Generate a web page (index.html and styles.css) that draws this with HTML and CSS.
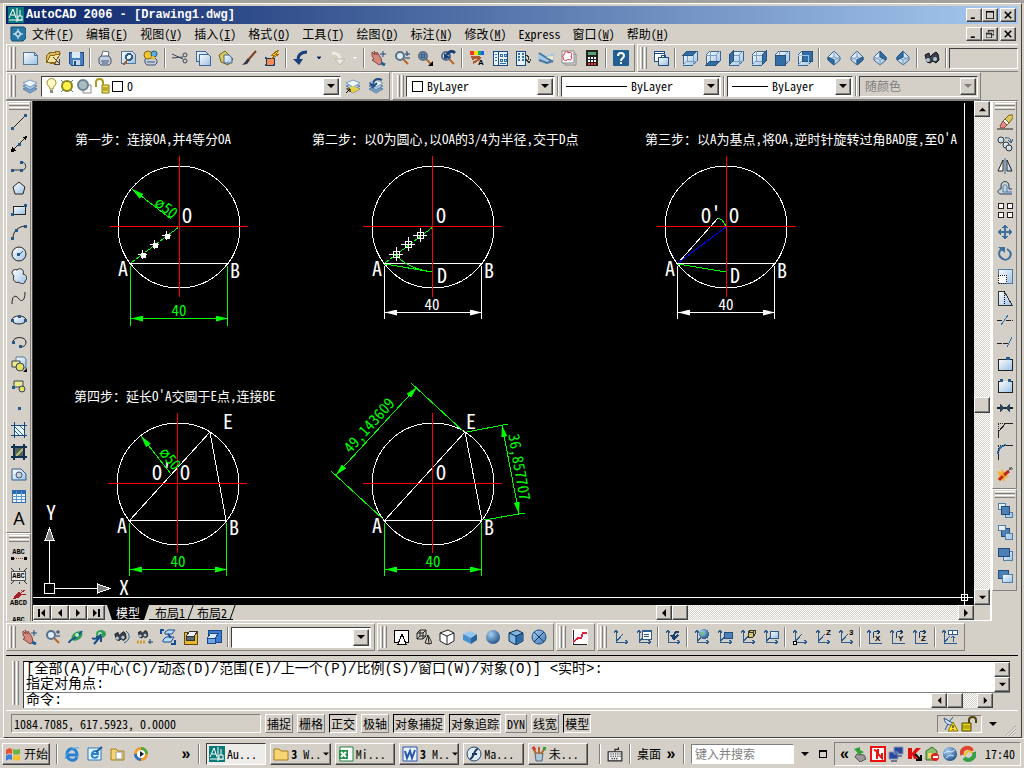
FILE: index.html
```
<!DOCTYPE html>
<html lang="zh-CN">
<head>
  <meta charset="UTF-8">
  <title>AutoCAD 2006 - [Drawing1.dwg]</title>
  <link rel="stylesheet" href="styles.css">
</head>
<body>
  <!-- shared icon parts -->
  <svg class="defs" aria-hidden="true">
    <defs>
      <linearGradient id="paper" x1="0" y1="0" x2="1" y2="1"><stop offset="0" stop-color="#fff"/><stop offset="1" stop-color="#9fc3e6"/></linearGradient>
      <linearGradient id="blue" x1="0" y1="0" x2="1" y2="1"><stop offset="0" stop-color="#a8d0f4"/><stop offset="1" stop-color="#3f78b0"/></linearGradient>
      <radialGradient id="ball" cx=".35" cy=".3" r=".8"><stop offset="0" stop-color="#a8d0f4"/><stop offset="1" stop-color="#174a80"/></radialGradient>
      <marker id="arrow" viewBox="0 0 12 6" refX="12" refY="3" markerWidth="12" markerHeight="6" orient="auto-start-reverse"><path d="M0 0L12 3L0 6z" class="tip"/></marker>
      <marker id="arrow-white" viewBox="0 0 12 6" refX="12" refY="3" markerWidth="12" markerHeight="6" orient="auto-start-reverse"><path d="M0 0L12 3L0 6z" class="tip-white"/></marker>
    </defs>
    <symbol id="cube" viewBox="0 0 16 16"><path d="M1 5l4-4h10v10l-4 4H1z" fill="url(#paper)" stroke="#3a6694"/><path d="M1 5h10v10M11 5l4-4M5 1v10h10M5 11l-4 4" fill="none" stroke="#7d9dbd"/></symbol>
    <symbol id="iso" viewBox="0 0 16 16"><path d="M8 1l6 6v3l-6 5-6-5V7z" fill="url(#paper)" stroke="#3a6694"/><path d="M2 7l6 3 6-3M8 10v5M8 1v6l-6 3M8 7l6 3" fill="none" stroke="#7d9dbd"/></symbol>
    <symbol id="ucs" viewBox="0 0 16 16"><path d="M3 1v12h12M1 4l2-3 2 3M12 11l3 2-3 2M3 13l7-8" fill="none" stroke="#2d5c8c"/></symbol>
    <symbol id="layers" viewBox="0 0 16 16"><path d="M1 11l7-3 7 3-7 4z" fill="#7da4cc" stroke="#5a7fa6"/><path d="M1 8l7-3 7 3-7 4z" fill="#a9c8e6" stroke="#5a7fa6"/><path d="M1 5l7-3 7 3-7 4z" fill="#eef6ff" stroke="#7d9dbd"/></symbol>
    <symbol id="printer" viewBox="0 0 16 16"><path d="M4 7l2-6 6 1-1 6" fill="#fff" stroke="#5b6a80"/><path d="M2 8l2-2h8l2 3v4l-2 2H4l-2-2z" fill="#c2cde0" stroke="#44546e"/><path d="M4 11h8M5 13h6" stroke="#44546e"/></symbol>
    <symbol id="hand" viewBox="0 0 16 16"><path d="M1 2l3 3-1-4 3 4V2l4 6 1 5-3 2-4-3-3-2 2-1-2-3z" fill="#d08a80" stroke="#8d443c"/><path d="M12 1v6M9 4h6" stroke="#1f4c80"/><path d="M10 13l4 2" stroke="#1f5c90" stroke-width="3"/></symbol>
    <symbol id="lens" viewBox="0 0 16 16"><path d="M9 9l5 5" stroke="#b5672c" stroke-width="2"/><circle cx="6" cy="6" r="4" fill="#dcecfb" stroke="#5b6f86" stroke-width="2"/></symbol>
    <symbol id="binocular" viewBox="0 0 16 16"><path d="M1 5l4-2 1 4 3-3 3-2 2 2 1 6-3 3-3-2-3 2-3-1z" fill="#39424e" stroke="#111"/><circle cx="4" cy="10" r="2" fill="#b5c4d6"/><circle cx="11" cy="9" r="2" fill="#b5c4d6"/></symbol>
    <symbol id="left" viewBox="0 0 8 8"><path d="M6 0v8L2 4z"/></symbol>
    <symbol id="right" viewBox="0 0 8 8"><path d="M2 0v8l4-4z"/></symbol>
    <symbol id="up" viewBox="0 0 8 8"><path d="M0 6h8L4 2z"/></symbol>
    <symbol id="down" viewBox="0 0 8 8"><path d="M0 2h8L4 6z"/></symbol>
    <symbol id="cad" viewBox="0 0 16 16"><path d="M0 0h16v16H0z" fill="#087a78"/><path d="M1 11l4-9 3 9M3 8h4M9 1v14M1 13h14M12 3v8" fill="none" stroke="#fff"/><path d="M10 9h4v4h-4z" fill="#087a78" stroke="#fff"/></symbol>
  </svg>

  <div class="window">
    <header class="title">
      <svg viewBox="0 0 16 16"><use href="#cad"/></svg>
      <h1>AutoCAD 2006 - [Drawing1.dwg]</h1>
      <div class="captions">
        <button aria-label="最小化"><svg viewBox="0 0 10 10"><path d="M1 8h5v2H1z"/></svg></button>
        <button aria-label="最大化"><svg viewBox="0 0 10 10"><path d="M0 0h10v10H0zM1 2v7h8V2z" fill-rule="evenodd"/></svg></button>
        <button class="close" aria-label="关闭"><svg viewBox="0 0 10 10"><path d="M1 1l8 8M9 1L1 9" stroke="#000" stroke-width="2"/></svg></button>
      </div>
    </header>

    <nav class="menu">
      <svg viewBox="0 0 16 16"><path d="M1 1h13l2 2v9l-3 3H2l-1-2z" fill="#2577a7" stroke="#174a70"/><path d="M8 3v10M3 8h10" stroke="#fff"/><path d="M6 6h4v4H6z" fill="#2577a7" stroke="#fff"/></svg>
      <a href="#">文件<span>(<u>F</u>)</span></a>
      <a href="#">编辑<span>(<u>E</u>)</span></a>
      <a href="#">视图<span>(<u>V</u>)</span></a>
      <a href="#">插入<span>(<u>I</u>)</span></a>
      <a href="#">格式<span>(<u>O</u>)</span></a>
      <a href="#">工具<span>(<u>T</u>)</span></a>
      <a href="#">绘图<span>(<u>D</u>)</span></a>
      <a href="#">标注<span>(<u>N</u>)</span></a>
      <a href="#">修改<span>(<u>M</u>)</span></a>
      <a href="#"><span>E<u>x</u>press</span></a>
      <a href="#">窗口<span>(<u>W</u>)</span></a>
      <a href="#">帮助<span>(<u>H</u>)</span></a>
      <div class="captions">
        <button aria-label="最小化文档"><svg viewBox="0 0 10 10"><path d="M1 8h5v2H1z"/></svg></button>
        <button aria-label="还原文档"><svg viewBox="0 0 10 10"><path d="M3 3V0h7v6H7M3 1h7M0 4h7v6H0zM0 5h7" fill="none" stroke="#000"/></svg></button>
        <button class="close" aria-label="关闭文档"><svg viewBox="0 0 10 10"><path d="M1 1l8 8M9 1L1 9" stroke="#000" stroke-width="2"/></svg></button>
      </div>
    </nav>

    <div class="row">
      <div class="bar">
        <i class="grip"></i>
        <button class="tool" aria-label="新建"><svg viewBox="0 0 16 16"><path d="M1 2h11l3 3v9H1z" fill="url(#paper)" stroke="#557697"/><path d="M12 2v3h3" fill="none" stroke="#557697"/></svg></button>
        <button class="tool" aria-label="打开"><svg viewBox="0 0 16 16"><path d="M2 5l4-3 2 1 5-2 2 1-5 12-9-2z" fill="#dcb95c" stroke="#8a6a1e"/><path d="M5 6l10-2-5 9-8-1z" fill="#f4e3a0" stroke="#8a6a1e"/><path d="M8 7l6 6M14 9v5H9" fill="none" stroke="#444"/></svg></button>
        <button class="tool" aria-label="保存"><svg viewBox="0 0 16 16"><path d="M1 2h14v13H3l-2-2z" fill="#4a7fc0" stroke="#1e4c84"/><path d="M4 2h8v6H4z" fill="#dceaf8"/><path d="M5 10h7v5H5z" fill="#c8d8ea"/><path d="M7 11v4" stroke="#1e4c84" stroke-width="2"/></svg></button>
        <i class="sep"></i>
        <button class="tool soft" aria-label="打印"><svg viewBox="0 0 16 16"><use href="#printer"/></svg></button>
        <button class="tool" aria-label="打印预览"><svg viewBox="0 0 16 16"><path d="M1 1h11l3 3v9H1z" fill="url(#paper)" stroke="#557697"/><circle cx="9" cy="7" r="3" fill="#e8f3ff" stroke="#375c82" stroke-width="2"/><path d="M7 10l-3 5" stroke="#a65b28" stroke-width="2"/></svg></button>
        <button class="tool soft" aria-label="发布"><svg viewBox="0 0 16 16"><path d="M2 9l2-1h8l2 2v3l-2 2H4l-2-2z" fill="#c2cde0" stroke="#44546e"/><path d="M4 12h8" stroke="#44546e"/><circle cx="5" cy="5" r="4" fill="#f2c230" stroke="#8a6a1e"/><circle cx="11" cy="4" r="3" fill="#5bb0d6" stroke="#1c5b86"/><circle cx="10" cy="8" r="2" fill="#f2c230"/></svg></button>
        <i class="sep"></i>
        <button class="tool soft" aria-label="剪切"><svg viewBox="0 0 16 16"><path d="M0 4l11 5M0 8l11-1" stroke="#3a4658"/><circle cx="13" cy="5" r="2" fill="none" stroke="#3a4658"/><circle cx="13" cy="11" r="2" fill="none" stroke="#3a4658"/></svg></button>
        <button class="tool" aria-label="复制"><svg viewBox="0 0 16 16"><path d="M1 1h9l2 2v8H1z" fill="url(#paper)" stroke="#3f6792"/><path d="M4 4h9l2 2v9H4z" fill="url(#paper)" stroke="#3f6792"/></svg></button>
        <button class="tool soft" aria-label="粘贴"><svg viewBox="0 0 16 16"><path d="M1 5l6-4 8 8-5 6-7-3z" fill="#ddc75a" stroke="#77661c"/><path d="M6 5h5l3 3v5H6z" fill="url(#paper)" stroke="#3f6792"/></svg></button>
        <button class="tool soft" aria-label="特性匹配"><svg viewBox="0 0 16 16"><path d="M15 1L8 9" stroke="#7c3f20" stroke-width="2"/><path d="M7 8l2 2-3 4-5 1 3-3z" fill="#333"/></svg></button>
        <button class="tool" aria-label="块编辑器"><svg viewBox="0 0 16 16"><path d="M2 8h8v7H2z" fill="#f58a5b" stroke="#1c3550"/><path d="M14 0L8 5h3L7 9l8-5h-3l3-4z" fill="#ffd92e" stroke="#a26a00"/><path d="M1 7h2v2H1zM9 14h2v2H9zM1 14h2v2H1z" fill="#1c4c80"/></svg></button>
        <i class="sep"></i>
        <button class="tool soft" aria-label="放弃"><svg viewBox="0 0 16 16"><path d="M14 2C8 2 5 5 5 10" fill="none" stroke="#17407a" stroke-width="3"/><path d="M0 9h10l-4 6z" fill="#17407a"/></svg></button>
        <button class="drop" aria-label="放弃列表"><svg viewBox="0 0 8 8"><path d="M2 3h4L4 5z" stroke="#17407a"/></svg></button>
        <button class="tool soft" aria-label="重做"><svg viewBox="0 0 16 16"><path d="M3 3c6 0 8 2 8 7" fill="none" stroke="#eeece8" stroke-width="3"/><path d="M6 9h10l-5 6z" fill="#eeece8" stroke="#bbb7ae"/></svg></button>
        <button class="drop" aria-label="重做列表"><svg viewBox="0 0 8 8"><path d="M2 3h4L4 5z" fill="#fff"/></svg></button>
        <i class="sep"></i>
        <button class="tool soft" aria-label="实时平移"><svg viewBox="0 0 16 16"><use href="#hand"/></svg></button>
        <button class="tool soft" aria-label="实时缩放"><svg viewBox="0 0 16 16"><use href="#lens"/><path d="M11 4h5M13 1v5M11 8h5" stroke="#163f70"/></svg></button>
        <button class="tool soft" aria-label="窗口缩放"><svg viewBox="0 0 16 16"><use href="#lens"/><path d="M4 4h4v4H4z" fill="#4c86bd" stroke="#17406f"/><path d="M16 11v5h-5z"/></svg></button>
        <button class="tool soft" aria-label="缩放上一个"><svg viewBox="0 0 16 16"><use href="#lens"/><path d="M15 3C11-1 8 3 7 5" fill="none" stroke="#17407a" stroke-width="3"/><path d="M4 3l7 5-7 1z" fill="#17407a"/></svg></button>
        <i class="sep"></i>
        <button class="tool" aria-label="特性"><svg viewBox="0 0 16 16"><path d="M1 1h4v4H1z" fill="#e32"/><path d="M5 1h4v4H5z" fill="#fd0"/><path d="M9 1h3v4H9z" fill="#0b5"/><path d="M12 1h3v4h-3z" fill="#25f"/><path d="M2 7h7M3 9l8-2M4 13l8-5" stroke="#a85a38" stroke-width="2"/><text x="9" y="15" class="glyph">A</text></svg></button>
        <button class="tool" aria-label="设计中心"><svg viewBox="0 0 16 16"><path d="M1 1h14v14H1z" fill="#eaf4ff" stroke="#184a80"/><path d="M6 1v14" stroke="#184a80"/><path d="M3 4h2M3 7h2M3 10h2M8 4h2v2H8zM12 4h2v2h-2zM8 9h2v2H8zM12 9h2v2h-2zM8 13h6" fill="none" stroke="#316fa8"/></svg></button>
        <button class="tool" aria-label="工具选项板"><svg viewBox="0 0 16 16"><path d="M1 1h9v14H1z" fill="#eaf4ff" stroke="#184a80"/><path d="M3 4h2M3 7h2M3 10h2M7 4h2M7 7h2M7 10h2" stroke="#316fa8" stroke-width="2"/><path d="M10 5c3 0 4 2 4 5M11 9l3 4 2-4" fill="none" stroke="#333"/></svg></button>
        <button class="tool soft" aria-label="图纸集管理器"><svg viewBox="0 0 16 16"><path d="M0 2l8 4 8-3v7l-8 4-8-3z" fill="#a6c9e5"/><path d="M1 3l14 9M1 10l8 3 6-2" fill="none" stroke="#4b789e" stroke-width="2"/><path d="M8 7l7-1v4z" fill="#f6eac0"/></svg></button>
        <button class="tool soft" aria-label="标记集管理器"><svg viewBox="0 0 16 16"><path d="M4 4h11v11H4z" fill="#ddd" stroke="#888"/><path d="M1 1h12v12H1z" fill="#fff" stroke="#888"/><path d="M3 5c0-4 4-4 4-2 3-2 5 1 3 3 2 3-1 5-3 3-2 3-6 1-4-1-2-1-1-3 0-3z" fill="none" stroke="#d8203c"/></svg></button>
        <button class="tool" aria-label="快速计算器"><svg viewBox="0 0 16 16"><path d="M2 0h12v16H2z" fill="#222"/><path d="M4 2h8v3H4z" fill="#54a46c"/><path d="M4 8h2M7 8h2M10 8h2M4 11h2M7 11h2M10 11h2" stroke="#fff" stroke-width="2"/><path d="M4 14h2M7 14h2M10 14h2" stroke="#e33" stroke-width="2"/></svg></button>
        <i class="sep"></i>
        <button class="tool soft" aria-label="帮助"><svg viewBox="0 0 16 16"><rect x="0" y="0" width="16" height="16" rx="1" fill="#205f96"/><path d="M5 6c0-4 6-4 6 0 0 2-3 2-3 5" fill="none" stroke="#fff" stroke-width="2"/><path d="M7 12h2v2H7z" fill="#fff"/></svg></button>
      </div>
      <div class="bar grow">
        <i class="grip"></i>
        <button class="tool" aria-label="命名视图"><svg viewBox="0 0 16 16"><path d="M1 1h10v10H1zM1 3h10" fill="#fff" stroke="#1e4f80"/><path d="M5 7h10v8H5z" fill="url(#paper)" stroke="#1e4f80"/><path d="M8 7V5h4v2" fill="none" stroke="#1e4f80"/></svg></button>
        <i class="sep"></i>
        <button class="tool" aria-label="俯视"><svg viewBox="0 0 16 16"><use href="#cube"/><path d="M1 5l4-4h10l-4 4z" class="face"/></svg></button>
        <button class="tool" aria-label="仰视"><svg viewBox="0 0 16 16"><use href="#cube"/><path d="M1 15l4-4h10l-4 4z" class="face"/></svg></button>
        <button class="tool" aria-label="左视"><svg viewBox="0 0 16 16"><use href="#cube"/><path d="M1 5l4-4v10l-4 4z" class="face"/></svg></button>
        <button class="tool" aria-label="右视"><svg viewBox="0 0 16 16"><use href="#cube"/><path d="M11 5l4-4v10l-4 4z" class="face"/></svg></button>
        <button class="tool" aria-label="主视"><svg viewBox="0 0 16 16"><use href="#cube"/><path d="M1 5h10v10H1z" class="face"/></svg></button>
        <button class="tool" aria-label="后视"><svg viewBox="0 0 16 16"><use href="#cube"/><path d="M5 1h10v10H5z" class="face"/><path d="M1 5h10v10" fill="none" stroke="#9fc3e6"/></svg></button>
        <i class="sep"></i>
        <button class="tool soft" aria-label="西南等轴测"><svg viewBox="0 0 16 16"><use href="#iso"/><path d="M2 7l6 3v5l-6-5z" class="face"/></svg></button>
        <button class="tool soft" aria-label="东南等轴测"><svg viewBox="0 0 16 16"><use href="#iso"/><path d="M14 7l-6 3v5l6-5z" class="face"/></svg></button>
        <button class="tool soft" aria-label="东北等轴测"><svg viewBox="0 0 16 16"><use href="#iso"/><path d="M8 1l6 6v3L8 7z" class="face"/></svg></button>
        <button class="tool soft" aria-label="西北等轴测"><svg viewBox="0 0 16 16"><use href="#iso"/><path d="M8 1L2 7v3l6-3z" class="face"/></svg></button>
        <i class="sep"></i>
        <button class="tool soft" aria-label="相机"><svg viewBox="0 0 16 16"><use href="#binocular"/></svg></button>
        <i class="sep"></i>
        <div class="combo empty"></div>
      </div>
    </div>

    <div class="row">
      <div class="bar">
        <i class="grip"></i>
        <button class="tool soft" aria-label="图层特性管理器"><svg viewBox="0 0 16 16"><use href="#layers"/></svg></button>
        <div class="combo layer">
          <svg class="state" viewBox="0 0 72 16">
            <path d="M5 11c0-3-3-3-3-6 0-6 9-6 9 0 0 3-3 3-3 6z" fill="#fffbc0" stroke="#9a8a30"/><path d="M5 12h3v3H5z" fill="#888"/>
            <circle cx="22" cy="8" r="5" fill="#fff04a" stroke="#8a8520" stroke-width="2"/><path d="M16 2l2 2M28 2l-2 2M16 14l2-2M28 14l-2-2" stroke="#3a8f8a"/>
            <path d="M38 7h8v8h-8z" fill="#fff" stroke="#888"/><circle cx="38" cy="7" r="5" fill="#a9bcc4" stroke="#6b8390" stroke-width="2"/>
            <path d="M57 7h7v8h-7z" fill="#f4e24a" stroke="#7f7418"/><path d="M51 9V4c0-4 7-4 7 0v3" fill="none" stroke="#a89c1e" stroke-width="2"/><path d="M58 10h5M58 12h5" stroke="#7f7418"/>
          </svg>
          <i class="swatch"></i>
          <select aria-label="图层"><option>0</option></select>
          <span class="arrow"><svg viewBox="0 0 8 8"><use href="#down"/></svg></span>
        </div>
        <button class="tool soft" aria-label="将对象的图层置为当前"><svg viewBox="0 0 16 16"><use href="#layers"/><path d="M1 11l7-3 7 3-7 4z" fill="#e6cf45"/><path d="M1 15l4-4M2 11h3v3" fill="none" stroke="#000"/></svg></button>
        <button class="tool soft" aria-label="上一个图层"><svg viewBox="0 0 16 16"><use href="#layers"/><path d="M14 2C8-1 5 3 5 7M2 5l3 4 4-4" fill="none" stroke="#1f4d7d" stroke-width="2"/></svg></button>
      </div>
      <div class="bar props">
        <i class="grip"></i>
        <div class="combo color">
          <i class="swatch"></i>
          <select aria-label="颜色"><option>ByLayer</option></select>
          <span class="arrow"><svg viewBox="0 0 8 8"><use href="#down"/></svg></span>
        </div>
        <i class="sep"></i>
        <div class="combo linetype">
          <i class="line"></i>
          <select aria-label="线型"><option>ByLayer</option></select>
          <span class="arrow"><svg viewBox="0 0 8 8"><use href="#down"/></svg></span>
        </div>
        <i class="sep"></i>
        <div class="combo weight">
          <i class="line"></i>
          <select aria-label="线宽"><option>ByLayer</option></select>
          <span class="arrow"><svg viewBox="0 0 8 8"><use href="#down"/></svg></span>
        </div>
        <i class="sep"></i>
        <div class="combo plot">
          <select aria-label="打印样式" disabled><option>随颜色</option></select>
          <span class="arrow"><svg viewBox="0 0 8 8"><use href="#down"/></svg></span>
        </div>
      </div>
    </div>

    <main class="work">
      <div class="dock">
        <div class="bar side">
          <i class="grip"></i>
          <button class="tool" aria-label="直线"><svg viewBox="0 0 16 16"><path d="M2 14L14 2" stroke="#222"/><path d="M0 13h3v3H0zM13 0h3v3h-3z" class="node"/></svg></button>
          <button class="tool" aria-label="构造线"><svg viewBox="0 0 16 16"><path d="M1 15L15 1" stroke="#222"/><path d="M0 16l1-5 4 4zM16 0l-1 5-4-4z"/><path d="M7 7h3v3H7z" class="node"/></svg></button>
          <button class="tool soft" aria-label="多段线"><svg viewBox="0 0 16 16"><path d="M1 12h10c5 0 5-7 0-8" fill="none" stroke="#333"/><path d="M0 11h3v3H0zM9 11h3v3H9zM9 3h3v3H9z" class="node"/></svg></button>
          <button class="tool soft" aria-label="正多边形"><svg viewBox="0 0 16 16"><path d="M8 2l6 5-2 7H4L2 7z" fill="url(#paper)" stroke="#222"/></svg></button>
          <button class="tool" aria-label="矩形"><svg viewBox="0 0 16 16"><path d="M2 4h12v8H2z" fill="url(#paper)" stroke="#222"/><path d="M0 11h3v3H0zM13 2h3v3h-3z" class="node"/></svg></button>
          <button class="tool soft" aria-label="圆弧"><svg viewBox="0 0 16 16"><path d="M2 14C2 8 6 3 14 2" fill="none" stroke="#222"/><path d="M0 13h3v3H0zM4 5h3v3H4zM13 1h3v3h-3z" class="node"/></svg></button>
          <button class="tool soft" aria-label="圆"><svg viewBox="0 0 16 16"><circle cx="8" cy="8" r="7" fill="url(#paper)" stroke="#222"/><path d="M8 9l4-4" stroke="#1e5c98"/><path d="M6 7h3v3H6z" class="node"/></svg></button>
          <button class="tool soft" aria-label="修订云线"><svg viewBox="0 0 16 16"><path d="M3 8C-1 5 2 0 6 2c3-3 8 0 6 4 5 1 4 6 2 7 0 4-5 3-6 1-4 2-7-3-5-6z" fill="url(#paper)" stroke="#222"/></svg></button>
          <button class="tool soft" aria-label="样条曲线"><svg viewBox="0 0 16 16"><path d="M1 14C1 2 7 7 8 9s6 4 6-7" fill="none" stroke="#222"/></svg></button>
          <button class="tool soft" aria-label="椭圆"><svg viewBox="0 0 16 16"><ellipse cx="8" cy="8" rx="7" ry="4" fill="url(#paper)" stroke="#222"/><path d="M0 7h3v3H0zM7 3h3v3H7zM13 7h3v3h-3z" class="node"/></svg></button>
          <button class="tool soft" aria-label="椭圆弧"><svg viewBox="0 0 16 16"><path d="M2 8c0-6 13-6 13 0 0 4-3 5-6 5" fill="none" stroke="#222"/><path d="M1 7h3v3H1zM8 11h3v3H8z" class="node"/></svg></button>
          <button class="tool soft" aria-label="插入块"><svg viewBox="0 0 16 16"><path d="M5 1h8l2 2v9H5z" fill="url(#paper)" stroke="#557697"/><path d="M1 5h8v6H1z" fill="#eee88c" stroke="#345"/><circle cx="9" cy="11" r="4" fill="#e4de62" stroke="#345"/><path d="M16 12v4h-4z"/></svg></button>
          <button class="tool soft" aria-label="创建块"><svg viewBox="0 0 16 16"><path d="M3 3h9v6H3z" fill="#eee88c" stroke="#345"/><circle cx="11" cy="11" r="3" fill="#e4de62" stroke="#345"/><path d="M1 8h3v3H1z" class="node"/></svg></button>
          <button class="tool" aria-label="点"><svg viewBox="0 0 16 16"><path d="M7 7h3v3H7z" class="node"/></svg></button>
          <button class="tool" aria-label="图案填充"><svg viewBox="0 0 16 16"><path d="M3 3h10v10H3z" fill="#eaf5ff"/><path d="M3 8l5 5M3 4l9 9M8 3l5 5" stroke="#1e6aa6"/><path d="M3 0v16M13 0v16M0 3h16M0 13h16" stroke="#174a7c"/></svg></button>
          <button class="tool" aria-label="渐变色"><svg viewBox="0 0 16 16"><path d="M3 3h10v10H3z" fill="#52645c"/><path d="M5 12l7-7" stroke="#b7b573" stroke-width="2"/><path d="M3 0v16M13 0v16M0 3h16M0 13h16" stroke="#122f50" stroke-width="2"/></svg></button>
          <button class="tool soft" aria-label="面域"><svg viewBox="0 0 16 16"><path d="M1 3h9l5 5v6H1z" fill="url(#paper)" stroke="#2d5c8c"/><circle cx="8" cy="9" r="3" fill="#d4d0c8" stroke="#2d5c8c"/></svg></button>
          <button class="tool" aria-label="表格"><svg viewBox="0 0 16 16"><path d="M1 2h13v12H1z" fill="#eef6ff" stroke="#2d6cb0"/><path d="M1 4h13" stroke="#2d6cb0" stroke-width="3"/><path d="M1 8h13M1 11h13M5 3v11M10 3v11" stroke="#5f93cc"/></svg></button>
          <button class="tool letter">A</button>
        </div>
        <div class="bar side cut">
          <i class="grip"></i>
          <button class="tool abc"><span>ABC</span><svg viewBox="0 0 16 4"><path d="M0 1h3v3H0zM13 1h3v3h-3z"/><path d="M3 2h10" stroke="#a33" stroke-dasharray="1 1"/></svg></button>
          <button class="tool abc boxed"><svg viewBox="0 0 16 3"><path d="M0 0l3 3M16 0l-3 3M8 0v2" stroke="#333"/></svg><span>ABC</span><svg viewBox="0 0 16 3"><path d="M3 0L0 3M13 0l3 3M8 1v2" stroke="#333"/></svg></button>
          <button class="tool abc"><svg viewBox="0 0 16 9"><path d="M2 9l3-5 3-2 3 3-4 3z" fill="#a31f24"/><path d="M10 3l4-3M11 4h4M10 1V0" stroke="#a31f24"/></svg><span>ABCD</span></button>
          <button class="tool abc"><span>ABC</span></button>
        </div>
      </div>

      <section class="sheet">
        <div class="view">
          <svg class="drawing" viewBox="33 101 941 504" preserveAspectRatio="xMinYMin meet">
            <g class="caption">
              <text x="75" y="144">第一步：连接OA,并4等分OA</text>
              <text x="312" y="144">第二步：以O为圆心,以OA的3/4为半径,交于D点</text>
              <text x="645" y="144">第三步：以A为基点,将OA,逆时针旋转过角BAD度,至O'A</text>
              <text x="74" y="401">第四步：延长O'A交圆于E点,连接BE</text>
            </g>

            <!-- step 1 -->
            <g class="white"><circle cx="179" cy="227" r="61"/><path d="M131 263.5h97"/></g>
            <path class="red" d="M179.5 156v141M110 226.5h138"/>
            <path class="green dash" d="M131 263L179 227"/>
            <path class="green" d="M130.5 266v60M227.5 266v60"/>
            <path class="green ends" d="M131 318.5h97"/>
            <path class="green end" d="M171 219L132 189"/>
            <g class="points"><path d="M138 254.5h9M142.5 250v9M150 244.5h9M154.5 240v9M162 235.5h9M166.5 231v9"/><path class="dot" d="M141 253h4v4h-4zM153 243h4v4h-4zM165 234h4v4h-4z"/></g>
            <g class="label"><text x="182" y="223">O</text><text x="118" y="276">A</text><text x="230" y="278">B</text></g>
            <g class="dim"><text x="179" y="316">40</text><text transform="translate(163 212) rotate(38)">ø50</text></g>

            <!-- step 2 -->
            <g class="white"><circle cx="433" cy="227" r="61"/><path d="M385 263.5h97M384.5 266v53M481.5 266v53"/></g>
            <path class="red" d="M432.5 156v141M363 226.5h139"/>
            <path class="green dash" d="M385 263L433 227"/>
            <path class="green" d="M385 264L432 272M396 254Q405 268 432 272"/>
            <path class="white ends-white" d="M385 312.5h97"/>
            <g class="points"><path d="M389 254.5h14M396.5 247v14M401 244.5h14M408.5 237v14M413 235.5h14M420.5 228v14"/><path d="M393.5 251.5h6v6h-6zM405.5 241.5h6v6h-6zM417.5 232.5h6v6h-6z"/></g>
            <g class="label"><text x="436" y="223">O</text><text x="372" y="276">A</text><text x="484" y="278">B</text><text x="437" y="283">D</text></g>
            <g class="dim light"><text x="432" y="310">40</text></g>

            <!-- step 3 -->
            <g class="white"><circle cx="726" cy="227" r="61"/><path d="M678 263.5h97M677.5 266v53M774.5 266v53M678 263L718 218"/></g>
            <path class="red" d="M726.5 156v141M657 226.5h139"/>
            <path class="blue" d="M678 263L726 227"/>
            <path class="green" d="M678 264L726 272M718 218L722 220L726 226"/>
            <path class="white ends-white" d="M678 312.5h97"/>
            <g class="label"><text x="729" y="223">O</text><text x="701" y="223">O'</text><text x="665" y="276">A</text><text x="777" y="278">B</text><text x="730" y="283">D</text></g>
            <g class="dim light"><text x="726" y="310">40</text></g>

            <!-- step 4 -->
            <g class="white"><circle cx="178" cy="484" r="61"/><path d="M130 520.5h97M130 520L210 432L226 520"/></g>
            <path class="red" d="M177.5 413v140M108 483.5h139"/>
            <path class="green" d="M129.5 523v53M226.5 523v53"/>
            <path class="green ends" d="M130 569.5h97"/>
            <path class="green end" d="M171 474L141 436"/>
            <g class="label"><text x="180" y="480">O</text><text x="152" y="480">O'</text><text x="117" y="533">A</text><text x="229" y="535">B</text><text x="223" y="429">E</text></g>
            <g class="dim"><text x="178" y="567">40</text><text transform="translate(166 462) rotate(51)">ø50</text></g>

            <!-- measured result -->
            <g class="white"><circle cx="433" cy="484" r="61"/><path d="M385 520.5h97M385 520L465 432L482 520"/></g>
            <path class="red" d="M432.5 413v140M363 483.5h139"/>
            <path class="green" d="M384.5 523v53M481.5 523v53M383 519L331 471M463 431L411 383M467 432L508 424M484 520L525 513"/>
            <path class="green ends" d="M385 569.5h97"/>
            <path class="green ends" d="M336 475L417 387"/>
            <path class="green ends" d="M502 425L519 514"/>
            <g class="label"><text x="436" y="480">O</text><text x="372" y="533">A</text><text x="484" y="535">B</text><text x="466" y="429">E</text></g>
            <g class="dim"><text x="433" y="567">40</text><text transform="translate(373 429) rotate(-48)">49,143609</text><text transform="translate(514 468) rotate(80)">36,857707</text></g>

            <!-- ucs icon and crosshair -->
            <path class="white" d="M44.5 583.5h10v10h-10zM49.5 583V540M55 588.5h43"/>
            <path class="axis" d="M45 540.5h9L49.5 528zM97.5 584v9L110 588.5z"/>
            <g class="label"><text x="46" y="520">Y</text><text x="119" y="595">X</text></g>
            <path class="white" d="M964.5 103v502M33 597.5h940M961.5 594.5h6v6h-6z"/>
          </svg>
          <div class="vscroll"><button aria-label="向上"><svg viewBox="0 0 8 8"><use href="#up"/></svg></button><i class="space"></i><i class="thumb"></i><i class="space low"></i><button aria-label="向下"><svg viewBox="0 0 8 8"><use href="#down"/></svg></button></div>
        </div>
        <div class="tabs">
          <button aria-label="第一个"><svg viewBox="0 0 8 8"><path d="M0 0h2v8H0zM7 0v8L3 4z"/></svg></button>
          <button aria-label="上一个"><svg viewBox="0 0 8 8"><use href="#left"/></svg></button>
          <button aria-label="下一个"><svg viewBox="0 0 8 8"><use href="#right"/></svg></button>
          <button aria-label="最后一个"><svg viewBox="0 0 8 8"><path d="M6 0h2v8H6zM1 0v8l4-4z"/></svg></button>
          <button class="tab active">模型</button>
          <button class="tab">布局1</button>
          <button class="tab">布局2</button>
          <div class="hscroll"><button aria-label="向左"><svg viewBox="0 0 8 8"><use href="#left"/></svg></button><i class="thumb"></i><i class="space"></i><button aria-label="向右"><svg viewBox="0 0 8 8"><use href="#right"/></svg></button></div>
        </div>
      </section>

      <div class="dock">
        <div class="bar side">
          <i class="grip"></i>
          <button class="tool soft" aria-label="删除"><svg viewBox="0 0 16 16"><path d="M0 15h16" stroke="#222"/><path d="M12 1h4v3l-4 5-4-4z" fill="#d9c75e" stroke="#77661c"/><path d="M8 5l4 4-2 2-4-4z" fill="#fff" stroke="#77661c"/><path d="M6 7l4 4-3 3H4l-1-2z" fill="#e58a84" stroke="#8d443c"/></svg></button>
          <button class="tool soft" aria-label="复制对象"><svg viewBox="0 0 16 16"><g fill="url(#paper)" stroke="#333"><circle cx="4" cy="4" r="3"/><circle cx="9" cy="9" r="3"/><circle cx="12" cy="12" r="3"/></g><path d="M8 2c4-1 6 1 6 4M11 4l3 3 2-4" fill="none" stroke="#1b4f88"/></svg></button>
          <button class="tool soft" aria-label="镜像"><svg viewBox="0 0 16 16"><path d="M1 13L6 2v11z" fill="#fff" stroke="#222"/><path d="M10 2l5 11h-5z" fill="url(#paper)" stroke="#222"/><path d="M8 0v16" stroke="#2d6cb0"/></svg></button>
          <button class="tool soft" aria-label="偏移"><svg viewBox="0 0 16 16"><path d="M15 14H4c-4 0-4-5 0-5V6c0-6 8-6 8 0v3h3" fill="none" stroke="#1d3f66"/><path d="M15 12H6V7c0-3 4-3 4 0v5" fill="none" stroke="#3a7dc0"/></svg></button>
          <button class="tool" aria-label="阵列"><svg viewBox="0 0 16 16"><path d="M1 1h5v5H1zM10 1h5v5h-5zM1 10h5v5H1zM10 10h5v5h-5z" fill="#fff" stroke="#222"/></svg></button>
          <button class="tool" aria-label="移动"><svg viewBox="0 0 16 16"><path d="M8 0l3 4H9v3h3V5l4 3-4 3V9H9v3h2l-3 4-3-4h2V9H4v2L0 8l4-3v2h3V4H5z" fill="#416f9d"/></svg></button>
          <button class="tool soft" aria-label="旋转"><svg viewBox="0 0 16 16"><path d="M10 3c8 5 1 13-4 10-5-2-5-8-1-10" fill="none" stroke="#416f9d" stroke-width="2"/><path d="M1 1h7v6z" fill="#416f9d"/></svg></button>
          <button class="tool" aria-label="缩放"><svg viewBox="0 0 16 16"><path d="M1 1h14v14H1z" fill="url(#paper)" stroke="#55799d"/><path d="M1 7h8v8H1z" fill="#fff" stroke="#222" stroke-dasharray="1 1"/></svg></button>
          <button class="tool" aria-label="拉伸"><svg viewBox="0 0 16 16"><path d="M1 15V1h6l8 14z" fill="url(#paper)" stroke="#333"/><path d="M7 1v14" stroke="#000" stroke-dasharray="1 1"/></svg></button>
          <button class="tool" aria-label="修剪"><svg viewBox="0 0 16 16"><path d="M0 8h5M9 8h7" stroke="#222" stroke-dasharray="5 1 1 1"/><path d="M4 13l7-10" stroke="#2d6cb0"/></svg></button>
          <button class="tool" aria-label="延伸"><svg viewBox="0 0 16 16"><path d="M0 9h5M6 9h6" stroke="#222" stroke-dasharray="5 1 1 1"/><path d="M10 13l5-10" stroke="#2d6cb0"/></svg></button>
          <button class="tool" aria-label="打断于点"><svg viewBox="0 0 16 16"><path d="M1 3h14v11H1z" fill="url(#paper)" stroke="#222"/><path d="M9 1h4v3H9z" class="node"/></svg></button>
          <button class="tool" aria-label="打断"><svg viewBox="0 0 16 16"><path d="M1 3h14v11H1z" fill="url(#paper)"/><path d="M4 3H1v11h14V3h-3" fill="none" stroke="#222"/><path d="M3 1h3v3H3zM11 1h3v3h-3z" class="node"/></svg></button>
          <button class="tool" aria-label="合并"><svg viewBox="0 0 16 16"><path d="M0 8h16" stroke="#222" stroke-width="2"/><path d="M3 4l5 4-5 4zM13 4L8 8l5 4z" fill="#27435f"/></svg></button>
          <button class="tool" aria-label="倒角"><svg viewBox="0 0 16 16"><path d="M1 16v-6l8-9h7" fill="none" stroke="#222"/><path d="M1 9V1h7" fill="none" stroke="#222" stroke-dasharray="1 1"/></svg></button>
          <button class="tool" aria-label="圆角"><svg viewBox="0 0 16 16"><path d="M1 16v-6M9 1h7" stroke="#222"/><path d="M1 10c0-5 4-9 8-9" fill="none" stroke="#2d6cb0" stroke-width="2"/><path d="M1 9V1h7" fill="none" stroke="#222" stroke-dasharray="1 1"/></svg></button>
          <button class="tool soft" aria-label="分解"><svg viewBox="0 0 16 16"><path d="M0 5l4 1 1-3 3 3 3-1-1 4 2 2-4 1-1 4-3-3-4 1 2-4z" fill="#f3b23a"/><path d="M2 14l4-4M7 9l5-4" stroke="#c3261c" stroke-width="3"/><path d="M11 5l4-4M13 1v3M12 3h4" stroke="#555"/></svg></button>
        </div>
        <div class="bar side">
          <i class="grip"></i>
          <button class="tool" aria-label="前置"><svg viewBox="0 0 16 16"><path d="M1 1h7v6H1zM8 10h7v5H8z" class="sheet-light"/><path d="M4 4h8v8H4z" class="sheet-dark"/></svg></button>
          <button class="tool" aria-label="后置"><svg viewBox="0 0 16 16"><path d="M4 4h8v8H4z" class="sheet-dark"/><path d="M1 1h7v5H1zM8 9h7v6H8z" class="sheet-light"/></svg></button>
          <button class="tool" aria-label="置于对象之上"><svg viewBox="0 0 16 16"><path d="M6 5h9v9H6z" class="sheet-light"/><path d="M1 2h11v8H1z" class="sheet-dark"/></svg></button>
          <button class="tool" aria-label="置于对象之下"><svg viewBox="0 0 16 16"><path d="M1 2h10v8H1z" class="sheet-dark"/><path d="M5 6h10v8H5z" class="sheet-light"/></svg></button>
        </div>
      </div>
    </main>

    <div class="row lower">
      <div class="bar">
        <i class="grip"></i>
        <button class="tool soft" aria-label="三维平移"><svg viewBox="0 0 16 16"><use href="#hand"/></svg></button>
        <button class="tool soft" aria-label="三维缩放"><svg viewBox="0 0 16 16"><use href="#lens"/><path d="M11 3h4M13 1v4M11 7h4" stroke="#163f70"/></svg></button>
        <button class="tool soft" aria-label="三维动态观察"><svg viewBox="0 0 16 16"><ellipse cx="9" cy="7" rx="6" ry="4" fill="#2f9e55" transform="rotate(-35 9 7)"/><path d="M1 14c0-4 7-3 13-12" fill="none" stroke="#1c5b86" stroke-width="2"/><circle cx="9" cy="6" r="2" fill="#b8e8c0"/></svg></button>
        <button class="tool soft" aria-label="三维连续观察"><svg viewBox="0 0 16 16"><ellipse cx="10" cy="5" rx="5" ry="4" fill="#2f9e55"/><circle cx="9" cy="5" r="2" fill="#b8e8c0"/><path d="M1 9c3 2 8-1 9-4M3 15l6-7M5 8h5v5" fill="none" stroke="#1c4e86" stroke-width="2"/></svg></button>
        <button class="tool soft" aria-label="三维旋转"><svg viewBox="0 0 16 16"><use href="#binocular" width="13" height="13" y="1"/><path d="M12 2c5 4 4 9-2 12" fill="none" stroke="#2a5b8c"/></svg></button>
        <button class="tool soft" aria-label="三维调整距离"><svg viewBox="0 0 16 16"><use href="#binocular" width="12" height="11"/><path d="M11 13h5M13 10v5" stroke="#17406f"/><path d="M0 13h9" stroke="#d39a2c" stroke-width="3" stroke-dasharray="2 1"/></svg></button>
        <button class="tool soft" aria-label="三维调整剪裁平面"><svg viewBox="0 0 16 16"><path d="M5 3l3-2h7l-3 4H5zM3 11l3-3h8l-3 5H3z" fill="#b8d9f8" stroke="#174e91"/><path d="M8 5l3 4M1 5V1h3M15 11v4h-4" fill="none" stroke="#174e91" stroke-width="2"/></svg></button>
        <button class="tool" aria-label="前向剪裁"><svg viewBox="0 0 16 16"><path d="M1 3h13v12H1z" fill="#e8b82d" stroke="#5f4a12"/><path d="M3 7l4-5h8l-4 5v4H3z" fill="#eef" stroke="#333"/><path d="M3 7h8v4H3z" fill="#567" stroke="#333"/></svg></button>
        <button class="tool" aria-label="后向剪裁"><svg viewBox="0 0 16 16"><path d="M2 1h13v12H2z" fill="#3d7bd1" stroke="#1b4786"/><path d="M1 9l4-5h8l-4 5v5H1z" fill="#d6e9ff" stroke="#1b4786"/><path d="M1 9h8v5H1z" fill="#6ca4e6" stroke="#1b4786"/></svg></button>
        <i class="sep"></i>
        <div class="combo views"><select aria-label="视图"><option></option></select><span class="arrow"><svg viewBox="0 0 8 8"><use href="#down"/></svg></span></div>
      </div>
      <div class="bar">
        <i class="grip"></i>
        <button class="tool" aria-label="二维线框"><svg viewBox="0 0 16 16"><path d="M1 1h14v12H1z" fill="#fff" stroke="#000"/><path d="M9 5l4 10H5z" fill="#fff" stroke="#000"/></svg></button>
        <button class="tool soft" aria-label="三维线框"><svg viewBox="0 0 16 16"><path d="M1 4l3-3h6v6L7 10H1zM1 4h6v6M7 4l3-3M4 1v6h6M4 7l-3 3M12 6l4 8-3 1-4-1zM12 6l1 9" fill="none" stroke="#222"/></svg></button>
        <button class="tool soft" aria-label="消隐"><svg viewBox="0 0 16 16"><path d="M1 4l8-3 6 3v8l-7 4-7-4z" fill="#fff" stroke="#222"/><path d="M1 4l7 3 7-3M8 7v9" fill="none" stroke="#222"/></svg></button>
        <button class="tool soft" aria-label="平面着色"><svg viewBox="0 0 16 16"><path d="M1 5l7-3 7 3-6 4z" fill="#8fc6f2"/><path d="M1 5l8 4v6l-8-4z" fill="#4a90d0"/><path d="M9 9l6-4v6l-6 4z" fill="#2a639c"/></svg></button>
        <button class="tool soft" aria-label="体着色"><svg viewBox="0 0 16 16"><circle cx="8" cy="8" r="7" fill="url(#ball)"/></svg></button>
        <button class="tool soft" aria-label="带边框平面着色"><svg viewBox="0 0 16 16"><path d="M1 4l8-3 6 3v8l-7 4-7-4z" fill="#7db5e6" stroke="#112c48"/><path d="M8 7l7-3v8l-7 4z" fill="#2f6da8"/><path d="M1 4l7 3 7-3M8 7v9" fill="none" stroke="#112c48"/></svg></button>
        <button class="tool soft" aria-label="带边框体着色"><svg viewBox="0 0 16 16"><circle cx="8" cy="8" r="7" fill="url(#blue)" stroke="#1f4d7d"/><path d="M3 3l10 10M13 3L3 13" stroke="#173a60"/></svg></button>
      </div>
      <div class="bar">
        <i class="grip"></i>
        <button class="tool" aria-label="坡度"><svg viewBox="0 0 16 16"><path d="M0 0h16v16H0z" fill="#fff"/><path d="M1 1v14h14" fill="none" stroke="#222"/><path d="M1 13l5-4h3l2-5h4" fill="none" stroke="#e0203c" stroke-width="2"/></svg></button>
      </div>
      <div class="bar">
        <i class="grip"></i>
        <button class="tool" aria-label="UCS"><svg viewBox="0 0 16 16"><use href="#ucs"/></svg></button>
        <button class="tool" aria-label="显示 UCS 对话框"><svg viewBox="0 0 16 16"><use href="#ucs"/><path d="M6 1h9v9H6z" fill="#fff" stroke="#2d5c8c"/><path d="M6 2h9M8 5h5M8 7h5" stroke="#2d5c8c"/></svg></button>
        <i class="sep"></i>
        <button class="tool" aria-label="上一个 UCS"><svg viewBox="0 0 16 16"><path d="M3 1v12h12M1 4l2-3 2 3M12 11l3 2-3 2" fill="none" stroke="#2d5c8c"/><path d="M14 3c-4-1-5 2-5 5M6 6l3 4 4-4" fill="none" stroke="#17406f" stroke-width="2"/></svg></button>
        <i class="sep"></i>
        <button class="tool" aria-label="世界 UCS"><svg viewBox="0 0 16 16"><use href="#ucs"/><circle cx="10" cy="5" r="5" fill="url(#ball)"/><path d="M7 3l3-1 1 3-3 2zM11 7l3-2" fill="#76bf7a"/></svg></button>
        <button class="tool" aria-label="对象 UCS"><svg viewBox="0 0 16 16"><use href="#ucs"/><path d="M7 3h8v6H7z" class="sheet-dark"/></svg></button>
        <button class="tool" aria-label="面 UCS"><svg viewBox="0 0 16 16"><use href="#ucs"/><path d="M8 3l3-2h4v4l-2 3H8z" fill="#d6c76a" stroke="#333"/><path d="M8 3h5v5M13 3l2-2" fill="none" stroke="#333"/></svg></button>
        <button class="tool" aria-label="视图 UCS"><svg viewBox="0 0 16 16"><use href="#ucs"/><path d="M7 2h8v7H7z" fill="url(#paper)" stroke="#2d5c8c"/></svg></button>
        <i class="sep"></i>
        <button class="tool" aria-label="原点 UCS"><svg viewBox="0 0 16 16"><use href="#ucs"/><path d="M1 12h3v3H1z" fill="#fff" stroke="#000"/></svg></button>
        <button class="tool" aria-label="Z 轴矢量 UCS"><svg viewBox="0 0 16 16"><use href="#ucs"/><text x="11" y="6" class="glyph">Z</text></svg></button>
        <button class="tool" aria-label="三点 UCS"><svg viewBox="0 0 16 16"><use href="#ucs"/><text x="11" y="6" class="glyph">3</text></svg></button>
        <i class="sep"></i>
        <button class="tool" aria-label="X 轴旋转 UCS"><svg viewBox="0 0 16 16"><path d="M2 1v13h13M0 4l2-3 2 3" fill="none" stroke="#2d5c8c"/><path d="M6 9V5c0-3 4-3 6-2M10 1l3 2-3 2" fill="none" stroke="#17406f"/><text x="8" y="12" class="glyph">X</text></svg></button>
        <button class="tool" aria-label="Y 轴旋转 UCS"><svg viewBox="0 0 16 16"><path d="M2 1v13h13M0 4l2-3 2 3" fill="none" stroke="#2d5c8c"/><path d="M6 9V5c0-3 4-3 6-2M10 1l3 2-3 2" fill="none" stroke="#17406f"/><text x="8" y="12" class="glyph">Y</text></svg></button>
        <button class="tool" aria-label="Z 轴旋转 UCS"><svg viewBox="0 0 16 16"><path d="M2 1v13h13M0 4l2-3 2 3" fill="none" stroke="#2d5c8c"/><path d="M6 9V5c0-3 4-3 6-2M10 1l3 2-3 2" fill="none" stroke="#17406f"/><text x="8" y="12" class="glyph">Z</text></svg></button>
        <i class="sep"></i>
        <button class="tool" aria-label="应用 UCS"><svg viewBox="0 0 16 16"><path d="M2 1v13h13M0 4l2-3 2 3M2 14l6-7" fill="none" stroke="#2d5c8c"/><path d="M6 1h9v4H6zM10 1v4" fill="#fff" stroke="#2d5c8c"/><path d="M11 13V7M9 9l2-2 2 2" fill="none" stroke="#2d5c8c"/></svg></button>
      </div>
    </div>

    <div class="command">
      <i class="grip"></i>
      <div class="console">
        <div class="history">
          <div class="log"><p>[全部(A)/中心(C)/动态(D)/范围(E)/上一个(P)/比例(S)/窗口(W)/对象(O)] &lt;实时&gt;:</p><p>指定对角点:</p></div>
          <div class="vscroll"><button aria-label="向上"><svg viewBox="0 0 8 8"><use href="#up"/></svg></button><button aria-label="向下"><svg viewBox="0 0 8 8"><use href="#down"/></svg></button></div>
        </div>
        <div class="prompt">
          <label for="cmd">命令:</label><input id="cmd" type="text">
          <div class="hscroll"><button aria-label="向左"><svg viewBox="0 0 8 8"><use href="#left"/></svg></button><i class="thumb"></i><i class="space"></i><button aria-label="向右"><svg viewBox="0 0 8 8"><use href="#right"/></svg></button></div>
        </div>
      </div>
    </div>

    <footer class="status">
      <div class="coords">1084.7085, 617.5923, 0.0000</div>
      <button>捕捉</button>
      <button>栅格</button>
      <button class="on">正交</button>
      <button>极轴</button>
      <button class="on">对象捕捉</button>
      <button class="on">对象追踪</button>
      <button>DYN</button>
      <button>线宽</button>
      <button class="on">模型</button>
      <div class="tray-cad">
        <svg viewBox="0 0 16 16"><path d="M2 2c1 7 6 8 10 6zM6 8l-3 6M7 6l4-5" fill="#cfe0f2" stroke="#29558c"/><path d="M11 6l5 9H6z" fill="#ffe12e" stroke="#8a7400"/><path d="M11 9v3M11 13v1" stroke="#000"/></svg>
        <svg viewBox="0 0 16 16"><path d="M1 7h9v8H1z" fill="#e8d51e" stroke="#4c4400"/><path d="M1 10h9M1 12h9" stroke="#8a7c00"/><path d="M8 7V4c0-4 7-4 7 0v3" fill="none" stroke="#4c4400" stroke-width="2"/></svg>
      </div>
      <svg class="more" viewBox="0 0 8 8"><use href="#down"/></svg>
      <svg class="size" viewBox="0 0 14 14"><path d="M2 14L14 2M6 14l8-8M10 14l4-4" stroke="#808080"/><path d="M3 14L14 3M7 14l7-7M11 14l3-3" stroke="#fff"/></svg>
    </footer>
  </div>

  <div class="taskbar">
    <button class="start"><svg viewBox="0 0 16 16"><path d="M1 4c2-2 4-2 6-1v5c-2-1-4-1-6 1z" fill="#e8512b"/><path d="M8 3c2 1 4 1 7 0v5c-3 1-5 1-7 0z" fill="#6db33f"/><path d="M1 10c2-2 4-2 6-1v5c-2-1-4-1-6 1z" fill="#3b7ddb"/><path d="M8 9c2 1 4 1 7 0v5c-3 1-5 1-7 0z" fill="#f5c02c"/></svg>开始</button>
    <i class="divider"></i>
    <div class="quick">
      <a href="#" aria-label="Internet Explorer"><svg viewBox="0 0 16 16"><path d="M13 11c-2 5-10 4-10-3s10-7 10 1H4" fill="none" stroke="#2681d4" stroke-width="3"/><path d="M1 13C2 7 10 0 15 2" fill="none" stroke="#55a7e8"/></svg></a>
      <a href="#" aria-label="Outlook Express"><svg viewBox="0 0 16 16"><path d="M1 2h13v12H1z" fill="#e8f4ff" stroke="#2b78bc"/><path d="M11 10c-2 3-7 2-6-2s6-4 6 0H6" fill="none" stroke="#2681d4" stroke-width="2"/><path d="M9 6l6-5" stroke="#1c5b9c" stroke-width="2"/></svg></a>
      <a href="#" aria-label="文件夹"><svg viewBox="0 0 16 16"><path d="M1 3h5l2 2h6v9H1z" fill="#f6d572" stroke="#a57d1d"/><path d="M6 6h6v7H6z" fill="#fff" stroke="#999"/></svg></a>
      <a href="#" aria-label="Media Player"><svg viewBox="0 0 16 16"><circle cx="8" cy="8" r="7" fill="#f09a28"/><path d="M8 1a7 7 0 0 1 7 7H8z" fill="#52a83e"/><path d="M8 15a7 7 0 0 1-7-7h7z" fill="#2c72c8"/><circle cx="8" cy="8" r="4" fill="#fff"/><path d="M7 5v6l4-3z" fill="#123"/></svg></a>
    </div>
    <span class="chevron">»</span>
    <i class="divider"></i>
    <div class="tasks">
      <button class="pressed"><svg viewBox="0 0 16 16"><use href="#cad"/></svg><span>Au...</span></button>
      <button><svg viewBox="0 0 16 16"><path d="M1 3h5l2 2h7v9H1z" fill="#f6d572" stroke="#a57d1d"/></svg><span><b>3</b> W..</span><svg class="tiny" viewBox="0 0 8 8"><use href="#down"/></svg></button>
      <button><svg viewBox="0 0 16 16"><path d="M2 1h13v14H2z" fill="#fff" stroke="#218340"/><path d="M1 4h9v9H1z" fill="#249047"/><path d="M3 6l5 5M8 6l-5 5" stroke="#fff" stroke-width="2"/></svg><span>Mi...</span></button>
      <button><svg viewBox="0 0 16 16"><path d="M1 1h14v14H1z" fill="#eaf2ff" stroke="#2757ad"/><path d="M3 5l2 7 3-7 2 7 3-8" fill="none" stroke="#2757ad" stroke-width="2"/></svg><span><b>3</b> M..</span><svg class="tiny" viewBox="0 0 8 8"><use href="#down"/></svg></button>
      <button><svg viewBox="0 0 16 16"><circle cx="8" cy="8" r="7" fill="#dfe9f3" stroke="#23476b"/><path d="M12 3C8 3 8 12 4 13M6 8h5" fill="none" stroke="#173a60" stroke-width="2"/></svg><span>Ma...</span></button>
      <button><svg viewBox="0 0 16 16"><path d="M4 7h8l-1 8H5z" fill="#aac8d8" stroke="#567"/><path d="M5 8L2 1M8 8V1M10 8l4-6" stroke="#b5672c" stroke-width="2"/><path d="M2 1l2 3" stroke="#d33" stroke-width="3"/><path d="M14 1l-1 3" stroke="#3a9a3a" stroke-width="3"/></svg><span>未...</span></button>
    </div>
    <i class="divider"></i>
    <svg class="keyboard" viewBox="0 0 14 14"><path d="M1 5h12v8H1zM7 5V3h3V1" fill="#eee" stroke="#222"/><path d="M3 7h9M3 9h9M4 11h6" stroke="#222" stroke-dasharray="1 1"/></svg>
    <i class="divider"></i>
    <span class="desk">桌面</span>
    <span class="chevron">»</span>
    <i class="divider"></i>
    <input class="search" type="text" placeholder="键入并搜索" aria-label="键入并搜索">
    <svg class="more" viewBox="0 0 8 8"><use href="#down"/></svg>
    <svg class="more" viewBox="0 0 8 8"><path d="M0 0h8v8H0zM1 2v5h6V2z" fill-rule="evenodd"/></svg>
    <div class="tray">
      <span class="fold">«</span>
      <svg viewBox="0 0 16 16"><path d="M5 8l7 1 2 4-6 3-5-5z" fill="#999" stroke="#555"/><path d="M2 3l6-2v3l4 2-6 3-1-3z" fill="#2fa335"/></svg>
      <svg viewBox="0 0 16 16"><path d="M1 1h14v14H1z" fill="#fff" stroke="#e11" stroke-width="2"/><path d="M4 4l3 1v8M8 3v5l4 4V7" fill="none" stroke="#e11" stroke-width="2"/></svg>
      <svg viewBox="0 0 16 16"><path d="M6 1h9v7H6zM1 6h9v7H1z" fill="#27479c" stroke="#8a98b8"/><path d="M3 15h6M10 10h4" stroke="#778" stroke-width="2"/></svg>
      <svg viewBox="0 0 16 16"><path d="M2 2h4v5l4-5h5L9 8l3 5H8L6 9v4H2z" fill="#e01010"/><path d="M9 8l5 5M15 9v5h-5" fill="none" stroke="#000" stroke-width="2"/></svg>
      <svg viewBox="0 0 16 16"><path d="M2 5l6-4 5 4v9H2z" fill="#8bc06a" stroke="#3c6b2c"/><path d="M4 7h5v5H4z" fill="#f3d766"/><circle cx="11" cy="11" r="4" fill="#e02222"/><path d="M9 11h5" stroke="#fff" stroke-width="2"/></svg>
      <svg viewBox="0 0 16 16"><circle cx="8" cy="8" r="7" fill="url(#ball)"/><path d="M2 7l4-2 3 1 4-2M4 12l4-3 4 1" fill="none" stroke="#cfe6ff"/></svg>
      <svg viewBox="0 0 16 16"><path d="M2 9c-2-7 8-10 10-4" fill="none" stroke="#e0452c" stroke-width="4"/><path d="M14 6c2 7-6 10-10 6" fill="none" stroke="#35a048" stroke-width="4"/><path d="M5 10c0-5 5-6 7-3" fill="none" stroke="#f5c02c" stroke-width="2"/></svg>
      <time>17:40</time>
    </div>
  </div>
</body>
</html>
```

FILE: styles.css
```
* {
  box-sizing: border-box;
}

html, body {
  margin: 0;
  height: 100vh;
  overflow: hidden;
}

body {
  display: flex;
  flex-direction: column;
  background: linear-gradient(#a4a19c 3px, #d4d0c8 3px);
  color: #000;
  font-family: "Noto Sans Mono CJK SC", "Liberation Mono", "Noto Sans CJK SC", monospace;
  font-size: 12px;
  line-height: 16px;
}

button, input, select {
  margin: 0;
  padding: 0;
  font: inherit;
  color: inherit;
}

a {
  color: inherit;
  text-decoration: none;
}

i, svg {
  display: block;
  flex: none;
}

.defs {
  position: absolute;
  width: 0;
  height: 0;
}

.glyph {
  font: bold 8px "Liberation Sans", sans-serif;
}

.face {
  fill: #326da5;
  stroke: #28527c;
}

.node {
  fill: #24598e;
}

.sheet-dark {
  fill: #4b7fb5;
  stroke: #1f4d7d;
}

.sheet-light {
  fill: url(#paper);
  stroke: #4f7da8;
}

.tip {
  fill: #0f0;
}

.tip-white {
  fill: #fff;
}

/* window frame */
.window {
  flex: 1;
  min-height: 0;
  display: flex;
  flex-direction: column;
  margin: 3px 2px 0 3px;
  padding: 2px 3px 1px 2px;
  border: 1px solid;
  border-color: #fff #404040 #404040 #fff;
  background: #d4d0c8;
}

.title {
  flex: none;
  display: flex;
  align-items: center;
  height: 18px;
  padding: 0 2px;
  background: linear-gradient(90deg, #0a246a, #a6caf0);
  color: #fff;
}

.title > svg {
  width: 16px;
  height: 16px;
  margin-right: 2px;
}

.title h1 {
  flex: 1;
  margin: 0;
  font-family: "Liberation Mono", monospace;
  font-size: 12px;
  line-height: 18px;
}

.menu {
  flex: none;
  display: flex;
  align-items: center;
  gap: 12px;
  height: 20px;
  padding: 0 2px 0 4px;
}

.menu > svg {
  width: 16px;
  height: 16px;
  margin-right: -6px;
}

.menu .captions {
  margin-left: auto;
}

.captions {
  display: flex;
}

.captions button,
.vscroll button, .hscroll button,
.tabs > button:not(.tab),
.arrow, .thumb {
  display: flex;
  align-items: center;
  justify-content: center;
  background: #d4d0c8;
  border: 1px solid;
  border-color: #fff #404040 #404040 #fff;
  box-shadow: inset -1px -1px #808080;
}

.captions button {
  width: 16px;
  height: 14px;
}

.captions .close {
  margin-left: 2px;
}

.captions svg {
  width: 8px;
  height: 8px;
}

/* toolbars */
.row {
  flex: none;
  display: flex;
  gap: 2px;
  height: 28px;
}

.bar {
  display: flex;
  align-items: center;
  padding: 0 2px;
  border: 1px solid;
  border-color: #fff #808080 #808080 #fff;
}

.bar.grow {
  flex: 1;
  border-right: 0;
  padding-right: 0;
}

.grip {
  width: 7px;
  height: 22px;
  margin-right: 2px;
  background: linear-gradient(90deg, #fff 1px, #d4d0c8 1px 2px, #808080 2px 3px, #d4d0c8 3px 4px, #fff 4px 5px, #d4d0c8 5px 6px, #808080 6px);
}

.sep {
  width: 2px;
  height: 20px;
  margin: 0 2px;
  border-left: 1px solid #808080;
  border-right: 1px solid #fff;
}

.tool, .drop {
  flex: none;
  display: flex;
  align-items: center;
  justify-content: center;
  width: 23px;
  height: 22px;
  padding-left: 1px;
  border: 0;
  background: none;
}

.tool svg {
  width: 16px;
  height: 16px;
  shape-rendering: crispEdges;
}

.soft svg {
  shape-rendering: auto;
}

.drop {
  width: 13px;
}

.drop svg {
  width: 8px;
  height: 8px;
}

.combo {
  display: flex;
  align-items: center;
  height: 21px;
  padding: 1px;
  border: 1px solid;
  border-color: #404040 #fff #fff #404040;
  background: #fff;
}

.combo select {
  flex: 1;
  min-width: 0;
  border: 0;
  padding: 0 4px;
  background: none;
  appearance: none;
}

.combo .arrow {
  width: 16px;
  height: 17px;
}

.arrow svg {
  width: 8px;
  height: 8px;
}

.empty {
  flex: 1;
  background: #d4d0c8;
}

.layer {
  width: 300px;
}

.state {
  width: 72px;
  height: 16px;
  margin-left: 2px;
}

.swatch {
  width: 11px;
  height: 11px;
  margin-left: 4px;
  border: 1px solid #000;
}

.state + .swatch {
  margin-left: -5px;
}

.line {
  flex: 1;
  height: 1px;
  margin-left: 3px;
  background: #000;
}

.props {
  padding-left: 4px;
}

.color {
  width: 149px;
}

.linetype {
  width: 160px;
}

.linetype select {
  flex: 0 0 76px;
}

.weight {
  width: 126px;
}

.weight select {
  flex: 0 0 67px;
}

.plot {
  width: 119px;
  background: #d4d0c8;
  color: #808080;
  fill: #808080;
}

.plot select {
  color: #808080;
  opacity: 1;
}

/* work area */
.work {
  flex: 1;
  min-height: 0;
  display: flex;
  border-top: 1px solid #808080;
}

.dock {
  flex: none;
  display: flex;
  flex-direction: column;
  width: 26px;
  overflow: hidden;
}

.side {
  flex: none;
  flex-direction: column;
  width: 25px;
  padding: 1px 0 3px;
}

.side .grip {
  width: 20px;
  height: 7px;
  margin: 0 0 1px;
  background: linear-gradient(#fff 1px, #d4d0c8 1px 2px, #808080 2px 3px, #d4d0c8 3px 4px, #fff 4px 5px, #d4d0c8 5px 6px, #808080 6px);
}

.letter {
  font: 18px "Open Sans", sans-serif;
}

.abc {
  flex-direction: column;
  padding: 0;
  font: bold 7px/8px "Liberation Mono", monospace;
}

.tool.abc svg {
  height: auto;
}

.boxed span {
  border: 1px solid #555;
  background: #eee;
}

.sheet {
  flex: 1;
  min-width: 0;
  display: flex;
  flex-direction: column;
  border-left: 1px solid #404040;
  border-right: 2px solid #fff;
}

.view {
  flex: 1;
  min-height: 0;
  display: flex;
}

.drawing {
  flex: 1;
  min-width: 0;
  height: 100%;
  background: #000;
  shape-rendering: crispEdges;
}

.drawing path, .drawing circle {
  fill: none;
}

.white, .axis, .points {
  stroke: #fff;
}

.drawing .axis {
  fill: #808080;
}

.drawing .dot {
  fill: #fff;
}

.red {
  stroke: #f00;
}

.green {
  stroke: #0f0;
}

.blue {
  stroke: #00f;
}

.dash {
  stroke-dasharray: 5 1;
}

.ends {
  marker-start: url(#arrow);
  marker-end: url(#arrow);
}

.end {
  marker-end: url(#arrow);
}

.ends-white {
  marker-start: url(#arrow-white);
  marker-end: url(#arrow-white);
}

.caption {
  fill: #fff;
  font-size: 13px;
}

.label {
  fill: #fff;
  font-size: 20px;
}

.dim {
  fill: #0f0;
  font-size: 15px;
  text-anchor: middle;
}

.dim.light {
  fill: #fff;
}

.vscroll, .hscroll {
  flex: none;
  display: flex;
  background: repeating-conic-gradient(#fff 0 25%, #d4d0c8 0 50%) 0 0 / 2px 2px;
}

.vscroll {
  flex-direction: column;
  width: 16px;
}

.vscroll button, .vscroll .thumb {
  width: 16px;
  height: 16px;
}

.hscroll button, .hscroll .thumb {
  width: 16px;
  height: 15px;
}

.vscroll svg, .hscroll svg {
  width: 7px;
  height: 7px;
}

.space {
  flex: 1;
}

.view .space {
  flex: 280;
}

.view .low {
  flex: 176;
}

.tabs {
  flex: none;
  display: flex;
  height: 16px;
  padding-right: 16px;
  border-bottom: 1px solid #fff;
}

.tabs > button:not(.tab) {
  width: 18px;
}

.tabs svg {
  width: 8px;
  height: 8px;
}

.tab {
  position: relative;
  width: 42px;
  border: 0;
  border-bottom: 1px solid #000;
  background: none;
  line-height: 13px;
}

.tab::after {
  content: "";
  position: absolute;
  top: 0;
  right: 0;
  width: 1px;
  height: 15px;
  background: #000;
  transform: skewX(-20deg);
}

.tab.active {
  margin-left: 2px;
  background: #000;
  color: #fff;
  clip-path: polygon(0 0, 100% 0, calc(100% - 5px) 100%, 5px 100%);
}

.tabs .hscroll {
  width: 318px;
  margin-left: auto;
}

.row.lower {
  height: 30px;
  padding-top: 2px;
}

.lower .bar {
  padding-right: 3px;
}

.views {
  width: 140px;
}

/* command line */
.command {
  flex: none;
  display: flex;
  margin-top: 4px;
  padding: 5px 8px 2px 6px;
  border-top: 1px solid #000;
}

.command .grip {
  height: 44px;
  margin-right: 4px;
}

.console {
  flex: 1;
  min-width: 0;
  border-top: 1px solid #000;
  border-left: 1px solid #404040;
  font-family: "Liberation Mono", "Noto Sans CJK SC", monospace;
  font-size: 14px;
  line-height: 15px;
}

.history {
  display: flex;
  height: 31px;
  background: #fff;
  border-bottom: 1px solid #808080;
}

.log {
  flex: 1;
  min-width: 0;
  padding-left: 2px;
  white-space: nowrap;
}

.log p {
  margin: 0;
  height: 15px;
}

.history .vscroll button {
  height: 15px;
}

.prompt {
  display: flex;
  height: 15px;
  padding-right: 17px;
}

.prompt label {
  padding-left: 2px;
  background: #fff;
}

.prompt input {
  flex: 1;
  min-width: 0;
  border: 0;
  background: #fff;
}

.prompt .hscroll {
  width: 62px;
}

/* status bar */
.status {
  flex: none;
  display: flex;
  align-items: center;
  gap: 4px;
  height: 26px;
  padding: 0 2px 0 5px;
  border-top: 1px solid #fff;
}

.coords {
  width: 250px;
  height: 19px;
  padding-left: 2px;
  border: 1px solid;
  border-color: #808080 #fff #fff #808080;
  line-height: 17px;
}

.status button {
  height: 19px;
  padding: 0 1px;
  border: 1px solid;
  border-color: #fff #808080 #808080 #fff;
  background: none;
  line-height: 16px;
}

.status .on {
  border-color: #000 #fff #fff #000;
}

.tray-cad {
  display: flex;
  gap: 3px;
  margin-left: auto;
  padding: 0 4px;
  border: 1px solid;
  border-color: #808080 #fff #fff #808080;
}

.tray-cad svg {
  width: 16px;
  height: 16px;
}

.more {
  width: 8px;
  height: 8px;
  margin: 0 3px;
}

.size {
  width: 12px;
  height: 12px;
  align-self: flex-end;
}

/* taskbar */
.taskbar {
  flex: none;
  display: flex;
  align-items: center;
  gap: 4px;
  height: 30px;
  padding: 2px 3px 2px 2px;
  border-top: 1px solid #fff;
  background: #d4d0c8;
  white-space: nowrap;
}

.start, .tasks button {
  display: flex;
  align-items: center;
  gap: 3px;
  height: 22px;
  border: 1px solid;
  border-color: #fff #404040 #404040 #fff;
  background: #d4d0c8;
  box-shadow: inset -1px -1px #808080;
}

.start {
  width: 48px;
  padding: 0 2px;
}

.taskbar svg {
  width: 16px;
  height: 16px;
}

.divider {
  width: 2px;
  height: 20px;
  margin: 0 2px;
  border-left: 1px solid #808080;
  border-right: 1px solid #fff;
}

.quick {
  display: flex;
  gap: 7px;
  flex: 0 0 112px;
}

.chevron {
  width: 12px;
  font: bold 16px/16px "Liberation Sans", sans-serif;
  text-align: center;
}

.tasks {
  flex: 1;
  min-width: 0;
  display: flex;
  gap: 4px;
  margin-right: 5px;
}

.tasks button {
  flex: 1;
  min-width: 0;
  gap: 2px;
  padding: 0 2px;
}

.tasks .pressed {
  border-color: #404040 #fff #fff #404040;
  background: #eeece8;
  box-shadow: none;
}

.taskbar .more {
  width: 8px;
  height: 8px;
}

.taskbar .tiny {
  width: 6px;
  height: 6px;
}

.search {
  width: 103px;
  height: 20px;
  padding: 0 3px;
  border: 1px solid;
  border-color: #808080 #fff #fff #808080;
  background: #fff;
}

.search::placeholder {
  color: #808080;
}

.tray {
  display: flex;
  align-items: center;
  gap: 2px;
  width: 187px;
  height: 24px;
  padding: 0 5px;
  border: 1px solid;
  border-color: #808080 #fff #fff #808080;
}

.fold {
  width: 10px;
  font: bold 16px/16px "Liberation Sans", sans-serif;
}

.tray time {
  margin-left: auto;
}
```
